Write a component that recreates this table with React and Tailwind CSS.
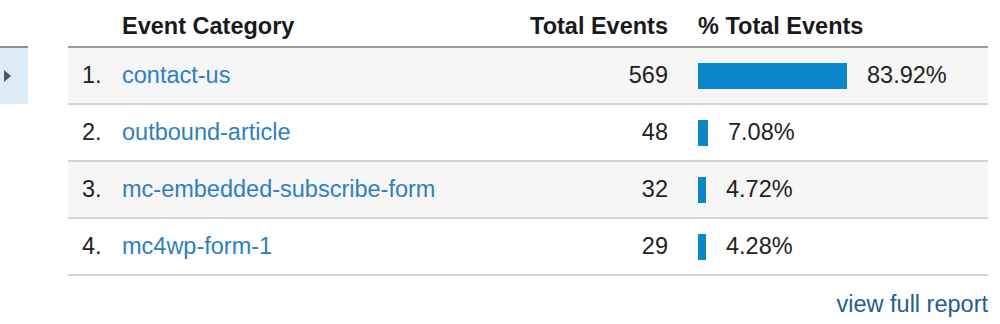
import React from 'react';

const rows = [
  { n: 1, name: 'contact-us', total: 569, pct: '83.92%', bar: 149 },
  { n: 2, name: 'outbound-article', total: 48, pct: '7.08%', bar: 10 },
  { n: 3, name: 'mc-embedded-subscribe-form', total: 32, pct: '4.72%', bar: 8 },
  { n: 4, name: 'mc4wp-form-1', total: 29, pct: '4.28%', bar: 8 },
];

const App = () => {
  return (
    <div className="w-[1000px] h-[324px] bg-white flex overflow-hidden font-['Liberation_Sans',Arial,sans-serif] text-[23.5px] leading-none text-[#222]">
      {/* side tab */}
      <div className="w-[28px] shrink-0 pt-[46px]">
        <div className="h-[58px] bg-[#dcebf5] border-t-2 border-[#8f8f8f] flex items-center pl-[4px]">
          <div className="w-0 h-0 border-y-[6px] border-y-transparent border-l-[7px] border-l-[#555]" />
        </div>
      </div>

      <div className="ml-[40px] w-[920px] flex flex-col">
        {/* header */}
        <div className="h-[48px] flex items-center border-b-2 border-[#9a9a9a] font-bold text-[#1a1a1a] pt-[7px]">
          <div className="w-[54px] shrink-0" />
          <div className="flex-1">Event Category</div>
          <div className="w-[160px] text-right">Total Events</div>
          <div className="w-[290px] ml-[30px]">% Total Events</div>
        </div>

        {rows.map((r) => (
          <div
            key={r.n}
            className={`h-[57px] flex items-center border-b-2 border-[#d4d4d4] ${r.n % 2 === 1 ? 'bg-[#f6f6f6]' : 'bg-white'}`}
          >
            <div className="w-[54px] shrink-0 pl-[14px] text-[#222]">{r.n}.</div>
            <div className="flex-1 text-[#2f7fc0]">{r.name}</div>
            <div className="w-[160px] text-right text-[#222]">{r.total}</div>
            <div className="w-[290px] ml-[30px] flex items-center">
              <div className="h-[26px] bg-[#0b86cb]" style={{ width: r.bar }} />
              <span className="ml-[20px] text-[#222]">{r.pct}</span>
            </div>
          </div>
        ))}

        <div className="flex justify-end pt-[17px]">
          <span className="text-[#245d92]">view full report</span>
        </div>
      </div>
    </div>
  );
};

export default App;
